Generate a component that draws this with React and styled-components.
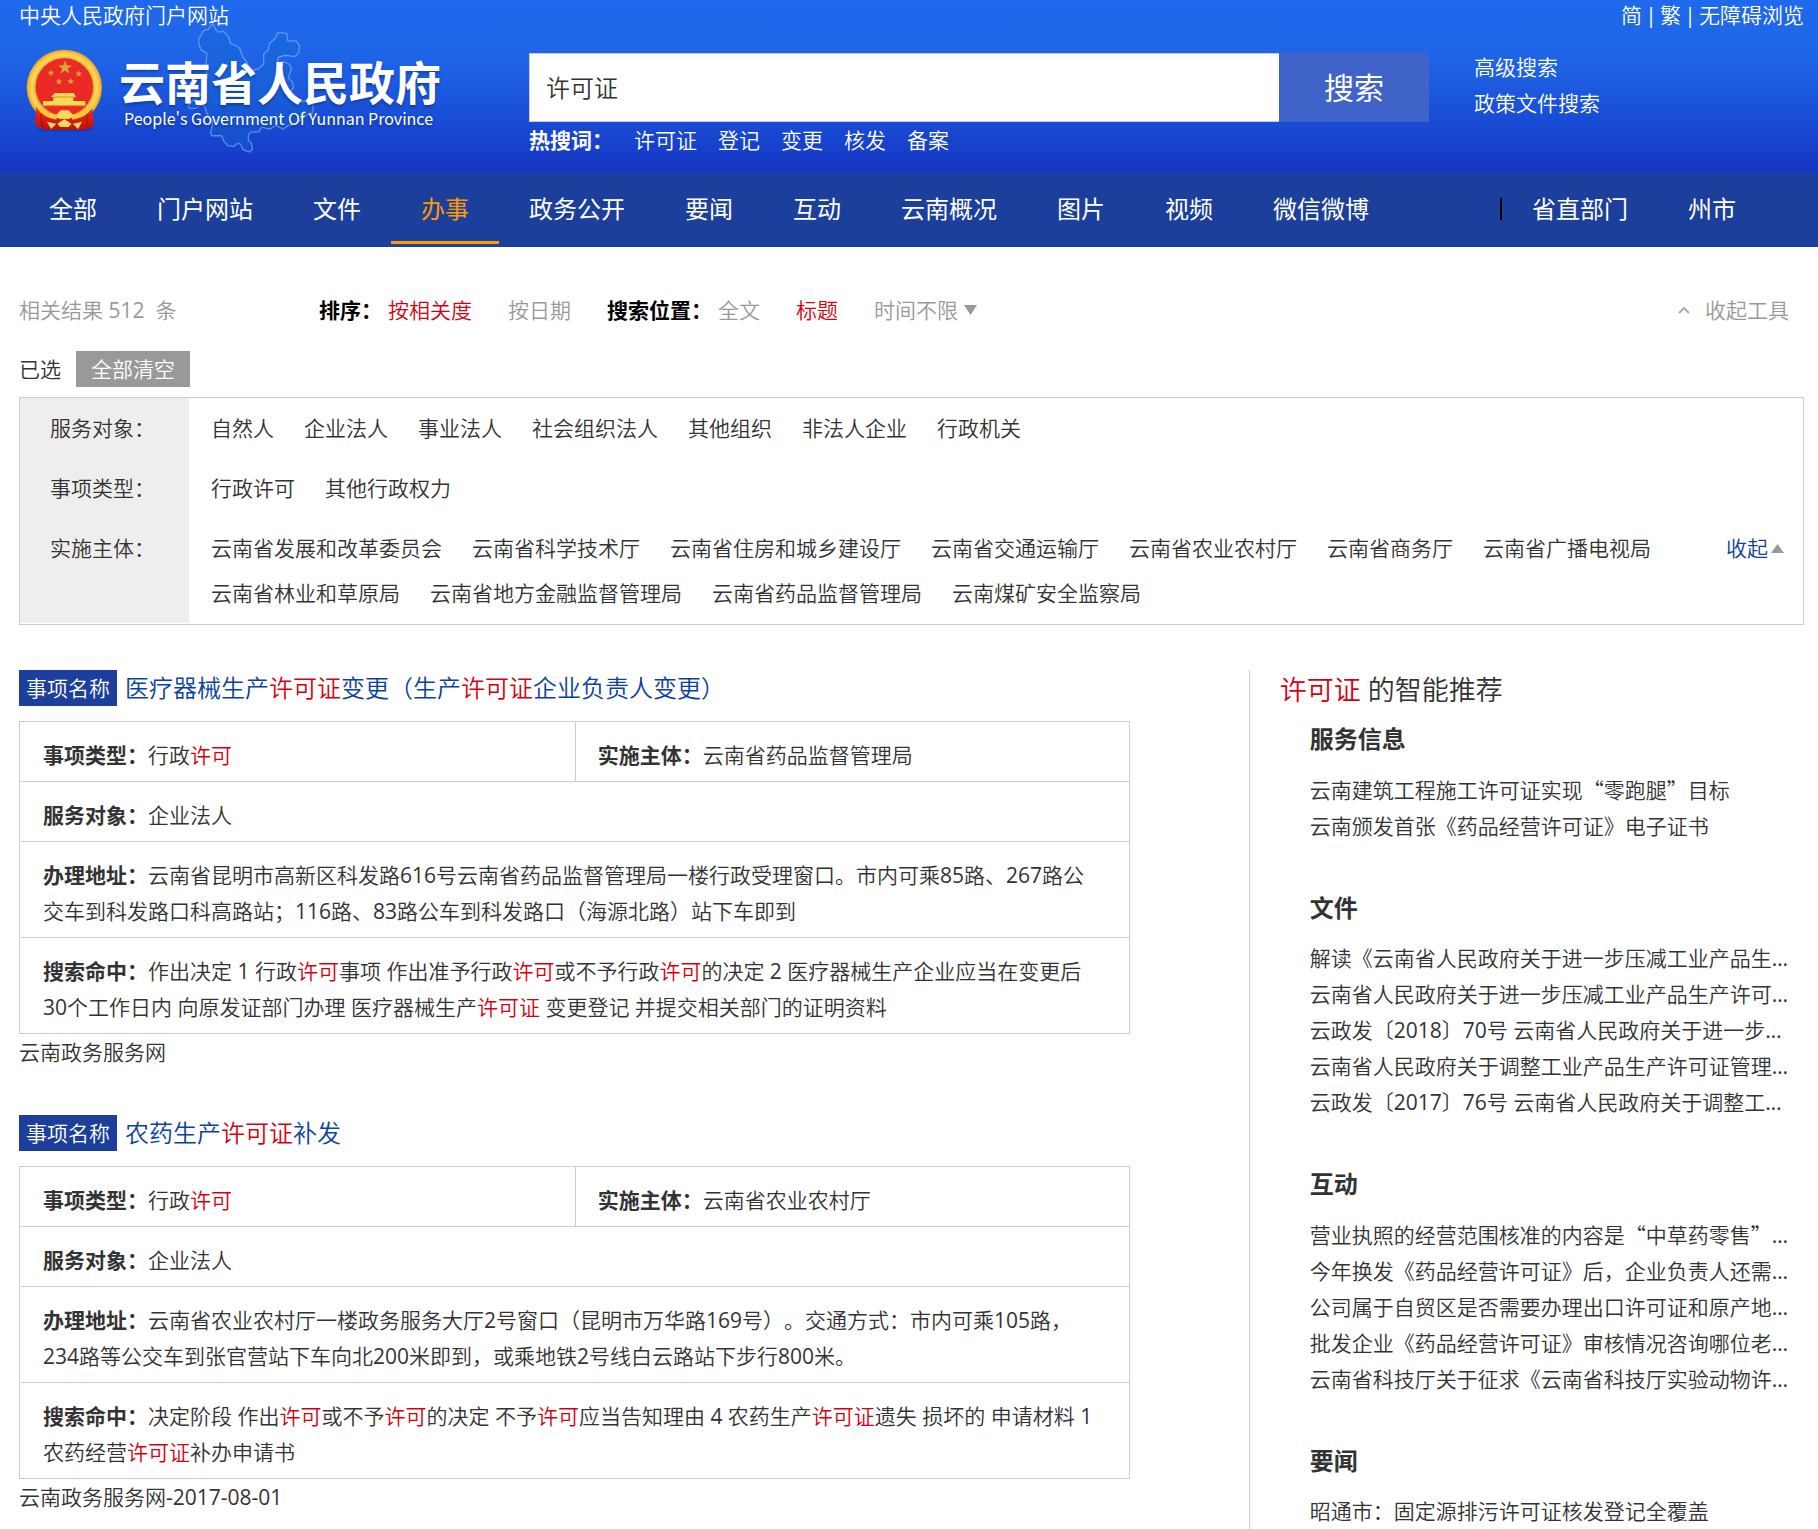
import React, { useState } from 'react';
import styled, { createGlobalStyle } from 'styled-components';

const boldFont = '"Open Sans", "Noto Sans CJK SC", sans-serif';

const GlobalStyle = createGlobalStyle`
  *, *::before, *::after {
    box-sizing: border-box;
  }

  body {
    margin: 0;
    background: #fff;
    color: #333;
    font-family: "Open Sans", "Noto Sans CJK SC DemiLight", "Noto Sans CJK SC", sans-serif;
    font-size: 21px;
    font-weight: 400;
    line-height: 36px;
    text-spacing-trim: space-all;
  }

  h1, h2, h3, p, ul, dl, dd {
    margin: 0;
    padding: 0;
  }

  ul {
    list-style: none;
  }

  a {
    color: inherit;
    text-decoration: none;
  }

  strong {
    font-family: ${boldFont};
    font-weight: 700;
  }

  button, input, select {
    font: inherit;
    color: inherit;
    border: 0;
    border-radius: 0;
    background: none;
    padding: 0;
    cursor: pointer;
  }
`

const Header = styled.header`
  background: linear-gradient(#1f69ec 0%, #1f67e9 25%, #1d5ee3 45%, #1537c4 98%);
  color: #fff;
  padding: 0 14px 15px 19px;
`

const TopBar = styled.div`
  display: flex;
  justify-content: space-between;
  line-height: 30px;
`

const Languages = styled.div`
  display: flex;

  span {
    width: 18px;
    text-align: center;
  }
`

const Brand = styled.div`
  display: flex;
  align-items: flex-start;
  padding-top: 19px;
`

const Logo = styled.a`
  position: relative;
  display: flex;
  flex: 0 0 510px;
  gap: 17px;
  padding-left: 7px;
`

const MapOutline = styled.svg`
  position: absolute;
  left: 168px;
  top: -29px;
  width: 128px;
  height: 133px;
`

const Emblem = styled.svg`
  position: relative;
  width: 76px;
  height: 84px;
`

const LogoText = styled.span`
  position: relative;
  display: flex;
  flex-direction: column;
  padding-top: 3px;
  font-family: "Noto Sans CJK SC", sans-serif;
  text-shadow: 0 2px 3px rgba(0, 20, 90, 0.4);
`

const LogoName = styled.span`
  font-size: 46px;
  font-weight: 700;
  line-height: 56px;
`

const LogoSub = styled.span`
  padding-left: 5px;
  font-size: 16px;
  font-weight: 400;
  line-height: 20px;
`

const Search = styled.div`
  flex: 0 1 900px;
  padding-top: 4px;
`

const SearchForm = styled.form`
  display: flex;
  height: 69px;

  input {
    flex: 1;
    min-width: 0;
    padding: 0 16px;
    border: 1px solid #ccc;
    border-right: 0;
    background: #fff;
    color: #333;
    font-size: 24px;
    outline: none;
    cursor: text;
  }

  button {
    width: 150px;
    background: #3f63c8;
    font-family: ${boldFont};
    font-size: 30px;
  }
`

const HotWords = styled.div`
  display: flex;
  gap: 21px;
`

const SearchLinks = styled.div`
  display: flex;
  flex-direction: column;
  padding-left: 45px;
`

const Nav = styled.nav`
  display: flex;
  justify-content: space-between;
  padding: 0 52px 3px 19px;
  background: #1c3f9c;
  color: #fff;
  font-family: ${boldFont};
  font-size: 24px;
  line-height: 71px;
`

const NavGroup = styled.div`
  display: flex;
  align-items: center;
`

const NavLink = styled.a`
  padding: 0 30px;
  color: ${({ $active }) => ($active ? '#ff9900' : '#fff')};
  box-shadow: ${({ $active }) => ($active ? 'inset 0 -3px #ff9900' : 'none')};
`

const NavDivider = styled.span`
  width: 2px;
  height: 22px;
  background: #000;
`

const Page = styled.main`
  padding: 45px 14px 0 19px;
`

const Toolbar = styled.div`
  display: grid;
  grid-template-columns: 300px 1fr auto;
  color: #999;
`

const Total = styled.p`
  white-space: pre;
`

const Options = styled.div`
  display: flex;
  gap: 36px;
`

const OptionGroup = styled.div`
  display: flex;
  gap: 36px;

  strong {
    margin-right: -30px;
    color: #000;
  }
`

const Option = styled.button`
  color: ${({ $active }) => ($active ? '#d7000f' : '#999')};
`

const TimeSelect = styled.label`
  display: flex;
  align-items: center;
  gap: 6px;

  select {
    appearance: none;
    outline: none;
  }
`

const CollapseTools = styled.button`
  display: flex;
  align-items: center;
  gap: 15px;
  padding-right: 15px;
`

const Selected = styled.div`
  display: flex;
  gap: 15px;
  padding: 23px 0 10px;
`

const ClearButton = styled.button`
  padding: 0 15px;
  background: #999;
  color: #fff;
`

const Filters = styled.section`
  border: 1px solid #ccc;
  padding-bottom: 1px;
`

const FilterRow = styled.div`
  display: grid;
  grid-template-columns: 169px 1fr 77px;
  line-height: 45px;
`

const FilterLabel = styled.h3`
  padding: 8px 0 7px 30px;
  background: #eee;
  font-size: 21px;
  font-weight: 400;
`

const FilterItems = styled.ul`
  display: flex;
  flex-wrap: wrap;
  column-gap: 30px;
  padding: 8px 22px 7px;
`

const FoldButton = styled.button`
  display: flex;
  align-items: center;
  align-self: start;
  gap: 3px;
  padding-top: 8px;
  color: #0b41a0;
  line-height: 45px;
`

const Columns = styled.div`
  display: grid;
  grid-template-columns: 2fr 1fr;
  gap: 119px;
  padding-top: 45px;
`

const Results = styled.div`
  display: flex;
  flex-direction: column;
  gap: 45px;
`

const ResultTitle = styled.h2`
  display: flex;
  gap: 8px;
  margin-bottom: 15px;
  color: #0b41a0;
  font-size: 24px;
  font-weight: 400;
`

const Tag = styled.span`
  padding: 0 7px;
  background: #1c3f9c;
  color: #fff;
  font-size: 21px;
`

const Mark = styled.em`
  color: #d7000f;
  font-style: normal;
`

const Details = styled.dl`
  border: 1px solid #ccc;
  padding-left: 1px;
`

const DetailRow = styled.div`
  display: grid;
  grid-template-columns: repeat(${({ $cells }) => $cells}, 1fr);

  & + & {
    border-top: 1px solid #ccc;
  }
`

const Detail = styled.div`
  padding: 15px 30px 8px 22px;

  & + & {
    border-left: 1px solid #ccc;
  }

  dt, dd {
    display: inline;
  }

  dt {
    font-family: ${boldFont};
    font-weight: 700;
  }
`

const Sidebar = styled.aside`
  min-width: 0;
  padding: 0 13px 0 30px;
  border-left: 1px solid #ccc;
`

const SidebarTitle = styled.h2`
  font-size: 27px;
  font-weight: 400;
  line-height: 40px;
`

const SidebarSection = styled.section`
  padding: 11px 0 35px 30px;

  &:last-child {
    padding-bottom: 0;
  }

  h3 {
    margin-bottom: 14px;
    font-family: ${boldFont};
    font-size: 24px;
    font-weight: 700;
  }

  li {
    overflow: hidden;
    text-overflow: ellipsis;
    white-space: nowrap;
  }
`

// full-width quotation marks only exist in the Chinese face
const Quote = styled.q`
  quotes: none;
  font-family: "Noto Sans CJK SC DemiLight", "Noto Sans CJK SC", sans-serif;
`

const navItems = ['全部', '门户网站', '文件', '办事', '政务公开', '要闻', '互动', '云南概况', '图片', '视频', '微信微博'];

const filters = [
  { label: '服务对象', items: ['自然人', '企业法人', '事业法人', '社会组织法人', '其他组织', '非法人企业', '行政机关'] },
  { label: '事项类型', items: ['行政许可', '其他行政权力'] },
  {
    label: '实施主体',
    foldable: true,
    items: [
      '云南省发展和改革委员会', '云南省科学技术厅', '云南省住房和城乡建设厅', '云南省交通运输厅',
      '云南省农业农村厅', '云南省商务厅', '云南省广播电视局', '云南省林业和草原局',
      '云南省地方金融监督管理局', '云南省药品监督管理局', '云南煤矿安全监察局',
    ],
  },
];

// [word] is highlighted
const results = [
  {
    title: '医疗器械生产[许可证]变更（生产[许可证]企业负责人变更）',
    type: '行政[许可]',
    owner: '云南省药品监督管理局',
    target: '企业法人',
    address: '云南省昆明市高新区科发路616号云南省药品监督管理局一楼行政受理窗口。市内可乘85路、267路公交车到科发路口科高路站；116路、83路公车到科发路口（海源北路）站下车即到',
    hit: '作出决定 1 行政[许可]事项 作出准予行政[许可]或不予行政[许可]的决定 2 医疗器械生产企业应当在变更后30个工作日内 向原发证部门办理 医疗器械生产[许可证] 变更登记 并提交相关部门的证明资料',
    source: '云南政务服务网',
  },
  {
    title: '农药生产[许可证]补发',
    type: '行政[许可]',
    owner: '云南省农业农村厅',
    target: '企业法人',
    address: '云南省农业农村厅一楼政务服务大厅2号窗口（昆明市万华路169号）。交通方式：市内可乘105路，234路等公交车到张官营站下车向北200米即到，或乘地铁2号线白云路站下步行800米。',
    hit: '决定阶段 作出[许可]或不予[许可]的决定 不予[许可]应当告知理由 4 农药生产[许可证]遗失 损坏的 申请材料 1 农药经营[许可证]补办申请书',
    source: '云南政务服务网-2017-08-01',
  },
];

const recommendations = [
  {
    title: '服务信息',
    items: ['云南建筑工程施工许可证实现“零跑腿”目标', '云南颁发首张《药品经营许可证》电子证书'],
  },
  {
    title: '文件',
    items: [
      '解读《云南省人民政府关于进一步压减工业产品生产许可证管理目录的决定》',
      '云南省人民政府关于进一步压减工业产品生产许可证管理目录的决定',
      '云政发〔2018〕70号 云南省人民政府关于进一步压减工业产品生产许可证管理目录的决定',
      '云南省人民政府关于调整工业产品生产许可证管理目录的决定',
      '云政发〔2017〕76号 云南省人民政府关于调整工业产品生产许可证管理目录的决定',
    ],
  },
  {
    title: '互动',
    items: [
      '营业执照的经营范围核准的内容是“中草药零售”是否需要办理许可证',
      '今年换发《药品经营许可证》后，企业负责人还需要参加培训吗',
      '公司属于自贸区是否需要办理出口许可证和原产地证明',
      '批发企业《药品经营许可证》审核情况咨询哪位老师',
      '云南省科技厅关于征求《云南省科技厅实验动物许可证管理办法》意见的通知',
    ],
  },
  { title: '要闻', items: ['昭通市：固定源排污许可证核发登记全覆盖'] },
];

function Highlight({ text }) {
  return text.split(/[[\]]/).map((part, i) => (i % 2 ? <Mark key={i}>{part}</Mark> : part));
}

function Quoted({ text }) {
  return text.split(/(“.*?”)/).map((part, i) => (i % 2 ? <Quote key={i}>{part}</Quote> : part));
}

function Star({ x, y, r }) {
  const points = Array.from({ length: 10 }, (_, i) => {
    const radius = i % 2 ? r * 0.4 : r;
    const angle = (Math.PI / 5) * i - Math.PI / 2;
    return `${x + radius * Math.cos(angle)},${y + radius * Math.sin(angle)}`;
  }).join(' ');
  return <polygon points={points} fill="#d9a436" />;
}

function EmblemIcon() {
  return (
    <Emblem viewBox="78 148 228 252" aria-hidden="true">
      <defs>
        <radialGradient id="gold">
          <stop offset="0.74" stopColor="#d99a24" />
          <stop offset="0.84" stopColor="#fbd75a" />
          <stop offset="0.92" stopColor="#fbc83e" />
          <stop offset="1" stopColor="#e0a02a" />
        </radialGradient>
        <linearGradient id="drape" x2="0" y2="1">
          <stop offset="0" stopColor="#f0301c" />
          <stop offset="1" stopColor="#c00e0c" />
        </linearGradient>
      </defs>
      <ellipse cx="194" cy="388" rx="84" ry="9" fill="#0a2a8c" opacity="0.35" />
      <circle cx="193" cy="263" r="113" fill="url(#gold)" />
      <circle cx="193" cy="262" r="86" fill="#ea2a24" />
      <Star x={195} y={204} r={22} />
      <Star x={153} y={220} r={11} />
      <Star x={236} y={222} r={11} />
      <Star x={177} y={246} r={11} />
      <Star x={212} y={245} r={11} />
      <path d="M165 280h57l5 12h-7v12h36v14H129v-14h31v-12h-7z" fill="#fbd75a" />
      <path d="M160 292h67M140 318h106" stroke="#d9951c" strokeWidth="3" />
      <path d="M108 322c18 22 42 30 64 34l21-8 21 8c24-4 44-12 62-34l6 58-28 10H133l-28-14z" fill="url(#drape)" />
      <path d="M116 322c12 18 32 28 54 32M272 322c-12 18-34 28-56 32" stroke="#fbc83e" strokeWidth="13" fill="none" />
      <path d="M168 346l14-14h24l14 14-12 12h-30z" fill="#fbd75a" />
      <path d="M141 366l28 6-16 16zM246 366l-28 6 16 16zM172 372l21-13 22 13-9 10h-25z" fill="#fbd75a" />
      <path d="M121 345l6 38M264 345l-4 38" stroke="#8f0808" strokeWidth="3" opacity="0.6" />
    </Emblem>
  );
}

function MapIcon() {
  return (
    <MapOutline viewBox="560 60 384 400" aria-hidden="true">
      <path
        d="M637 70L624 88L608 92L603 104L595 116L595 132L602 150L616 158L619 160L617 196L620 230L612 262L598 288L578 300L563 318L567 326L585 326L600 316L612 318L620 342L636 366L634 386L630 400L634 408L664 408L670 424L682 438L700 440L714 430L722 436L728 450L746 457L756 450L754 432L744 422L744 404L752 397L776 396L784 382L808 388L826 378L850 388L862 378L884 372L902 360L914 346L934 344L940 326L934 310L914 304L896 308L876 304L866 284L880 262L876 246L864 234L874 206L866 192L852 186L832 188L834 172L856 166L884 170L896 158L898 138L888 124L862 122L860 100L832 98L826 114L808 130L804 150L790 162L790 192L776 206L748 214L742 190L728 172L718 146L706 136L690 130L684 110L668 94L656 96L646 90Z"
        fill="#1466d2"
        fillOpacity="0.4"
        stroke="#8fb4f5"
        strokeOpacity="0.6"
        strokeWidth="4"
        strokeLinejoin="round"
      />
    </MapOutline>
  );
}

export default function App() {
  const [query, setQuery] = useState('许可证');

  return (
    <div lang="zh-CN">
      <GlobalStyle />

      <Header>
        <TopBar>
          <a href="#gov">中央人民政府门户网站</a>
          <Languages>
            <a href="#jian">简</a>
            <span>|</span>
            <a href="#fan">繁</a>
            <span>|</span>
            <a href="#wza">无障碍浏览</a>
          </Languages>
        </TopBar>

        <Brand>
          <Logo href="#home">
            <MapIcon />
            <EmblemIcon />
            <LogoText>
              <LogoName>云南省人民政府</LogoName>
              <LogoSub>People's Government Of Yunnan Province</LogoSub>
            </LogoText>
          </Logo>

          <Search>
            <SearchForm onSubmit={e => e.preventDefault()}>
              <input
                type="text"
                name="q"
                aria-label="搜索"
                value={query}
                onChange={e => setQuery(e.target.value)}
              />
              <button type="submit">搜索</button>
            </SearchForm>
            <HotWords>
              <strong>热搜词：</strong>
              {['许可证', '登记', '变更', '核发', '备案'].map(word => (
                <a key={word} href="#hot">{word}</a>
              ))}
            </HotWords>
          </Search>

          <SearchLinks>
            <a href="#advanced">高级搜索</a>
            <a href="#policy">政策文件搜索</a>
          </SearchLinks>
        </Brand>
      </Header>

      <Nav>
        <NavGroup>
          {navItems.map(item => (
            <NavLink key={item} href="#nav" $active={item === '办事'}>{item}</NavLink>
          ))}
        </NavGroup>
        <NavGroup>
          <NavDivider />
          <NavLink href="#departments">省直部门</NavLink>
          <NavLink href="#cities">州市</NavLink>
        </NavGroup>
      </Nav>

      <Page>
        <Toolbar>
          <Total>相关结果 512  条</Total>
          <Options>
            <OptionGroup>
              <strong>排序：</strong>
              <Option type="button" $active>按相关度</Option>
              <Option type="button">按日期</Option>
            </OptionGroup>
            <OptionGroup>
              <strong>搜索位置：</strong>
              <Option type="button">全文</Option>
              <Option type="button" $active>标题</Option>
            </OptionGroup>
            <TimeSelect>
              <select aria-label="时间" defaultValue="时间不限">
                <option>时间不限</option>
                <option>一周内</option>
                <option>一月内</option>
                <option>一年内</option>
              </select>
              <svg width="13" height="10" aria-hidden="true">
                <path d="M0 0h13l-6.500 10z" fill="#999" />
              </svg>
            </TimeSelect>
          </Options>
          <CollapseTools type="button">
            <svg width="12" height="8" aria-hidden="true">
              <path d="M1 7l5-5 5 5" fill="none" stroke="#aaa" strokeWidth="2" />
            </svg>
            收起工具
          </CollapseTools>
        </Toolbar>

        <Selected>
          已选
          <ClearButton type="button">全部清空</ClearButton>
        </Selected>

        <Filters>
          {filters.map(({ label, items, foldable }) => (
            <FilterRow key={label}>
              <FilterLabel>{label}：</FilterLabel>
              <FilterItems>
                {items.map(item => (
                  <li key={item}><a href="#filter">{item}</a></li>
                ))}
              </FilterItems>
              {foldable && (
                <FoldButton type="button">
                  收起
                  <svg width="13" height="9" aria-hidden="true">
                    <path d="M0 9h13l-6.500-9z" fill="#999" />
                  </svg>
                </FoldButton>
              )}
            </FilterRow>
          ))}
        </Filters>

        <Columns>
          <Results>
            {results.map(result => (
              <article key={result.title}>
                <ResultTitle>
                  <Tag>事项名称</Tag>
                  <a href="#result"><Highlight text={result.title} /></a>
                </ResultTitle>
                <Details>
                  <DetailRow $cells={2}>
                    <Detail>
                      <dt>事项类型：</dt>
                      <dd><Highlight text={result.type} /></dd>
                    </Detail>
                    <Detail>
                      <dt>实施主体：</dt>
                      <dd>{result.owner}</dd>
                    </Detail>
                  </DetailRow>
                  <DetailRow $cells={1}>
                    <Detail>
                      <dt>服务对象：</dt>
                      <dd>{result.target}</dd>
                    </Detail>
                  </DetailRow>
                  <DetailRow $cells={1}>
                    <Detail>
                      <dt>办理地址：</dt>
                      <dd>{result.address}</dd>
                    </Detail>
                  </DetailRow>
                  <DetailRow $cells={1}>
                    <Detail>
                      <dt>搜索命中：</dt>
                      <dd><Highlight text={result.hit} /></dd>
                    </Detail>
                  </DetailRow>
                </Details>
                <p>{result.source}</p>
              </article>
            ))}
          </Results>

          <Sidebar>
            <SidebarTitle><Mark>许可证</Mark> 的智能推荐</SidebarTitle>
            {recommendations.map(({ title, items }) => (
              <SidebarSection key={title}>
                <h3>{title}</h3>
                <ul>
                  {items.map(item => (
                    <li key={item}><a href="#recommend"><Quoted text={item} /></a></li>
                  ))}
                </ul>
              </SidebarSection>
            ))}
          </Sidebar>
        </Columns>
      </Page>
    </div>
  );
}
